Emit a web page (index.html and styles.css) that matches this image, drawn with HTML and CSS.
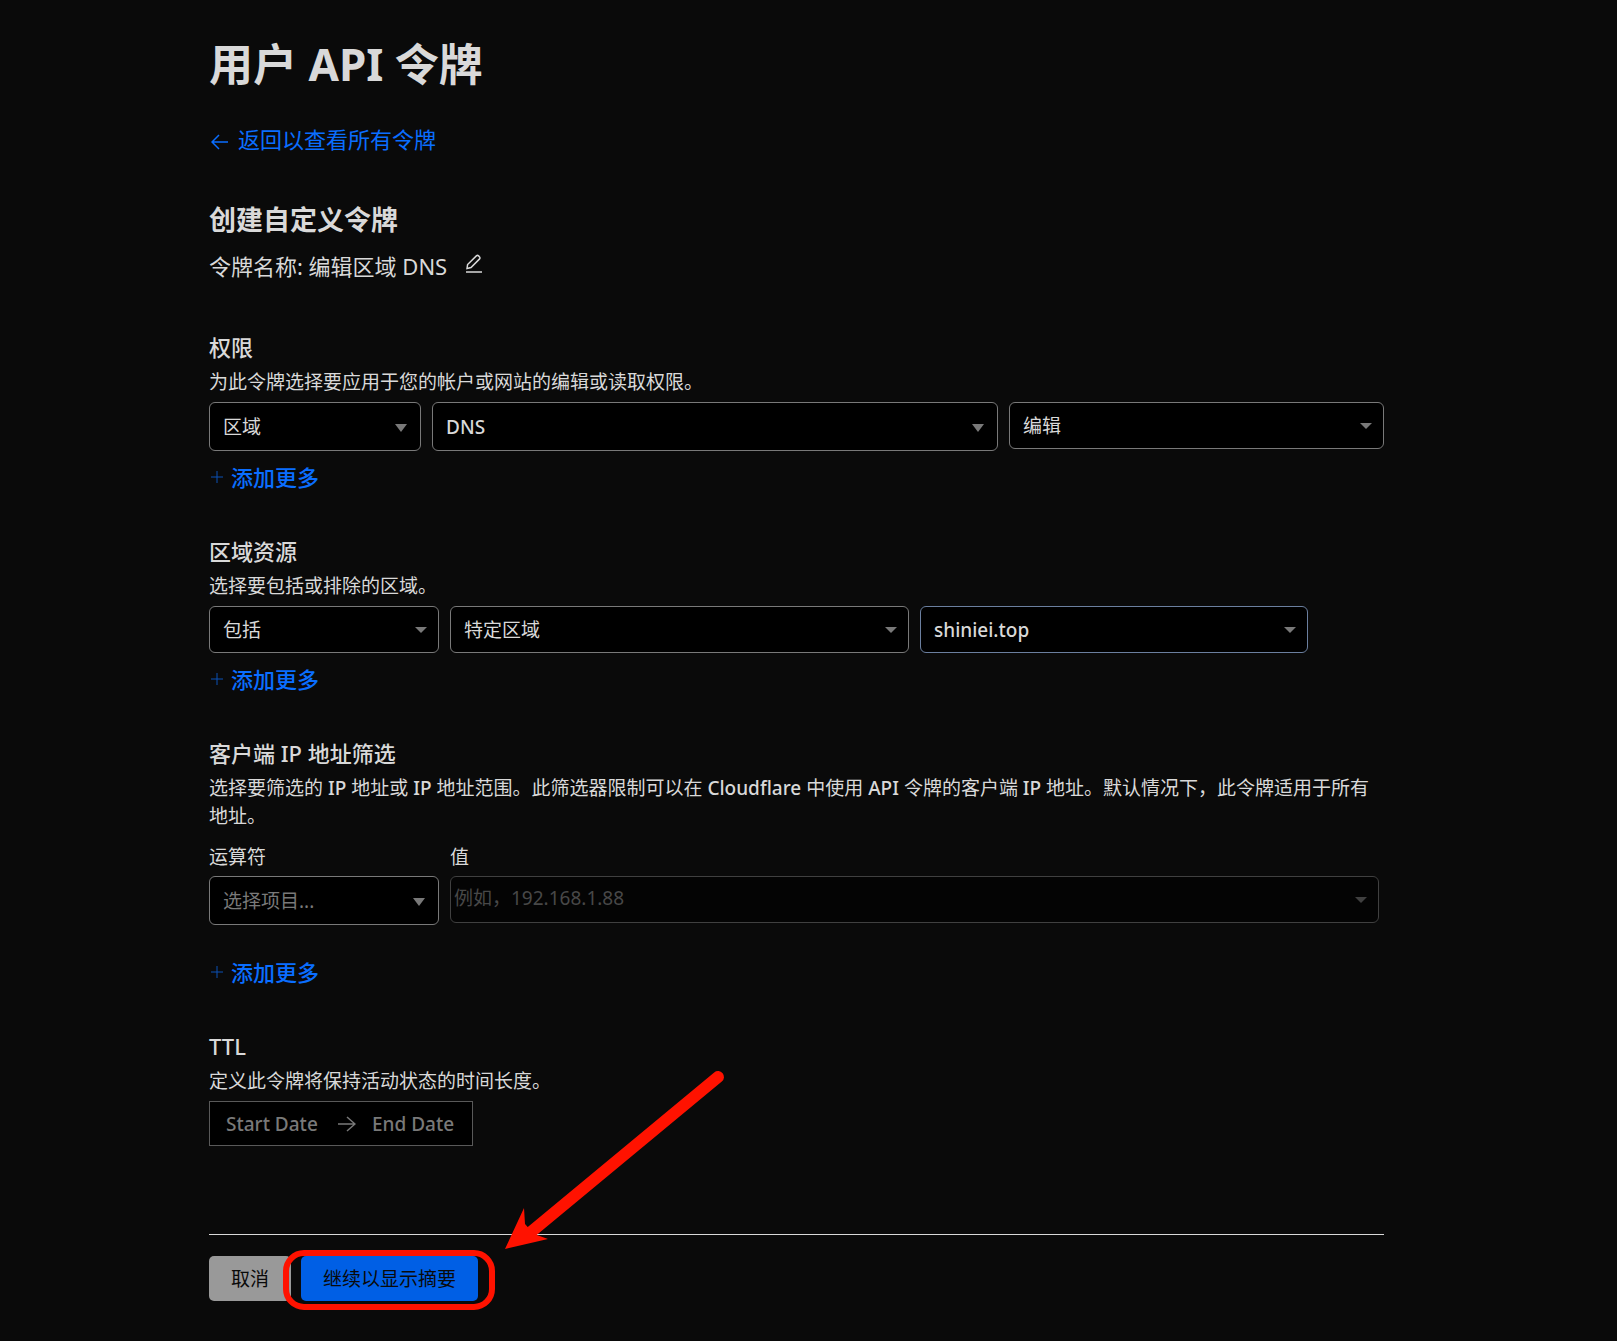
FILE: index.html
```html
<!DOCTYPE html>
<html lang="zh-CN">
<head>
<meta charset="utf-8">
<meta name="viewport" content="width=device-width, initial-scale=1">
<title>用户 API 令牌</title>
<link rel="stylesheet" href="styles.css">
</head>
<body>
<main class="page">
  <h1 class="page-title">用户 API 令牌</h1>
  <a class="back-link" href="#">
    <svg class="icon-back" width="18" height="16" viewBox="0 0 18 16" aria-hidden="true"><path d="M17 8H1M8 1 1 8l7 7"/></svg>
    <span>返回以查看所有令牌</span>
  </a>
  <h2 class="form-title">创建自定义令牌</h2>
  <div class="token-name">
    <span>令牌名称: 编辑区域 DNS</span>
    <button class="edit-button" type="button" aria-label="编辑令牌名称">
      <svg width="18" height="20" viewBox="0 0 18 20" aria-hidden="true"><path d="M2 14.5 2.6 10.5 11.6 1.7Q12.6 1 13.6 1.9L14.6 2.9Q15.5 3.9 14.6 4.9L6 13.6 2 14.5ZM1 18H17"/></svg>
    </button>
  </div>

  <form class="token-form">
    <section class="section">
      <h3 class="section-title">权限</h3>
      <p class="section-text">为此令牌选择要应用于您的帐户或网站的编辑或读取权限。</p>
      <div class="row row-permissions">
        <div class="select tall"><select aria-label="权限类别"><option>区域</option></select></div>
        <div class="select tall latin"><select aria-label="权限项目"><option>DNS</option></select></div>
        <div class="select"><select aria-label="访问级别"><option>编辑</option></select></div>
      </div>
      <button class="add-button" type="button"><svg width="14" height="14" viewBox="0 0 14 14" aria-hidden="true"><path d="M7 1v12M1 7h12"/></svg><span>添加更多</span></button>
    </section>

    <section class="section">
      <h3 class="section-title">区域资源</h3>
      <p class="section-text">选择要包括或排除的区域。</p>
      <div class="row row-resources">
        <div class="select"><select aria-label="包括或排除"><option>包括</option></select></div>
        <div class="select"><select aria-label="区域范围"><option>特定区域</option></select></div>
        <div class="select active latin"><select aria-label="区域"><option>shiniei.top</option></select></div>
      </div>
      <button class="add-button" type="button"><svg width="14" height="14" viewBox="0 0 14 14" aria-hidden="true"><path d="M7 1v12M1 7h12"/></svg><span>添加更多</span></button>
    </section>

    <section class="section">
      <h3 class="section-title">客户端 IP 地址筛选</h3>
      <p class="section-text">选择要筛选的 <span class="latin">IP</span> 地址或 <span class="latin">IP</span> 地址范围。此筛选器限制可以在 <span class="latin">Cloudflare</span> 中使用 <span class="latin">API</span> 令牌的客户端 <span class="latin">IP</span> 地址。默认情况下，此令牌适用于所有地址。</p>
      <div class="row row-filter">
        <div class="field">
          <label class="field-label" for="operator">运算符</label>
          <div class="select tall empty"><select id="operator"><option>选择项目...</option></select></div>
        </div>
        <div class="field">
          <label class="field-label" for="value">值</label>
          <div class="select disabled"><input id="value" type="text" placeholder="例如，192.168.1.88" disabled></div>
        </div>
      </div>
      <button class="add-button spaced" type="button"><svg width="14" height="14" viewBox="0 0 14 14" aria-hidden="true"><path d="M7 1v12M1 7h12"/></svg><span>添加更多</span></button>
    </section>

    <section class="section">
      <h3 class="section-title">TTL</h3>
      <p class="section-text">定义此令牌将保持活动状态的时间长度。</p>
      <div class="date-range latin">
        <input type="text" placeholder="Start Date" aria-label="Start Date">
        <svg width="18" height="16" viewBox="0 0 18 16" aria-hidden="true"><path d="M0 8h17M9 1l8 7-8 7"/></svg>
        <input type="text" placeholder="End Date" aria-label="End Date">
      </div>
    </section>

    <footer class="actions">
      <button class="button button-secondary" type="button">取消</button>
      <div class="callout">
        <button class="button button-primary" type="submit">继续以显示摘要</button>
        <span class="callout-ring"></span>
        <svg class="callout-arrow" width="222" height="182" viewBox="0 0 222 182" aria-hidden="true"><path class="shaft" d="M213 9 26 164"/><path class="head" d="M0 181 19 140 20 156 29 166 43 171Z"/></svg>
      </div>
    </footer>
  </form>
</main>
</body>
</html>
```
FILE: styles.css
```css
* {
  box-sizing: border-box;
}

body {
  margin: 0;
  padding: 36px 24px 40px 0;
  background: #0a0a0a;
  color: #d9d9d9;
  font: 400 19px/28px "Noto Sans", "Noto Sans CJK SC", sans-serif;
}

button,
input,
select {
  font: inherit;
  color: inherit;
}

h1,
h2,
h3,
p {
  margin: 0;
}

svg {
  flex: none;
  fill: none;
  stroke: currentColor;
}

.latin {
  font-weight: 500;
}

.page {
  width: 100%;
  max-width: 1175px;
  margin: 0 auto;
}

.page-title {
  font-size: 44px;
  line-height: 56px;
  font-weight: 700;
}

.back-link {
  display: flex;
  width: fit-content;
  align-items: center;
  gap: 9px;
  margin-top: 33px;
  padding-left: 2px;
  color: #0a6eff;
  font-size: 22px;
  text-decoration: none;
}

.icon-back {
  margin-top: 6px;
  stroke-width: 1.5;
}

.form-title {
  margin-top: 49px;
  font-size: 27px;
  line-height: 36px;
  font-weight: 700;
}

.token-name {
  display: flex;
  align-items: center;
  gap: 18px;
  margin-top: 12px;
  font-size: 22px;
  line-height: 32px;
}

.edit-button {
  display: flex;
  padding: 0 0 4px;
  border: 0;
  background: none;
  stroke-width: 1.5;
}

.token-form {
  display: flex;
  flex-direction: column;
  gap: 46px;
  margin-top: 51px;
}

.section-title {
  font-size: 22px;
  line-height: 28px;
  font-weight: 500;
}

.section-text {
  margin: 7px 0 6px;
}

.row {
  display: grid;
  gap: 11px;
  align-items: start;
}

.row-permissions {
  grid-template-columns: 212fr 566fr 375fr;
}

.row-resources {
  grid-template-columns: 230fr 459fr 388fr;
  margin-right: 76px;
}

.row-filter {
  grid-template-columns: 230fr 929fr;
  margin: 13px 5px 0 0;
}

.field-label {
  display: block;
  margin-bottom: 5px;
}

.select {
  position: relative;
  color: #797979;
}

.select::after {
  content: "";
  position: absolute;
  top: 21px;
  right: 12px;
  width: 12px;
  height: 6px;
  background: currentColor;
  clip-path: polygon(0 0, 100% 0, 50% 100%);
  pointer-events: none;
}

.select select,
.select input {
  display: block;
  width: 100%;
  height: 47px;
  padding: 0 32px 0 13px;
  border: 1px solid #797979;
  border-radius: 6px;
  background: #000;
  color: #d9d9d9;
  appearance: none;
}

.select.tall::after {
  top: 22px;
  right: 14px;
  height: 8px;
}

.select.tall select {
  height: 49px;
}

.select.active select {
  border-color: #6b7f9f;
}

.select.empty select {
  color: #797979;
}

.select.disabled {
  color: #404040;
}

.select.disabled input {
  padding: 0 32px 4px 3px;
  border-color: #404040;
  background: #040404;
}

input::placeholder {
  color: inherit;
  opacity: 1;
}

.select.disabled input::placeholder {
  color: #484848;
}

.add-button {
  display: flex;
  align-items: center;
  gap: 7px;
  margin-top: 12px;
  padding: 0 0 0 1px;
  border: 0;
  background: none;
  color: #0a6eff;
  font-size: 22px;
  line-height: 28px;
  font-weight: 500;
}

.add-button svg {
  opacity: 0.7;
}

.add-button.spaced {
  margin-top: 33px;
}

.date-range {
  display: flex;
  align-items: center;
  justify-content: space-between;
  width: 264px;
  height: 45px;
  padding: 0 16px;
  border: 1px solid #595959;
  background: #000;
  color: #797979;
}

.date-range input {
  width: 96px;
  padding: 0;
  border: 0;
  background: none;
}

.date-range input:last-child {
  width: 84px;
}

.date-range svg {
  stroke-width: 1.5;
}

.actions {
  display: flex;
  gap: 10px;
  margin-top: 42px;
  padding-top: 21px;
  border-top: 1px solid #d9d9d9;
}

.button {
  display: block;
  height: 45px;
  padding: 0 22px;
  border: 0;
  border-radius: 5px;
  color: #0a0a0a;
}

.button-secondary {
  background: #999;
}

.button-primary {
  background: #005fe5;
}

.callout {
  position: relative;
}

.callout-ring {
  position: absolute;
  inset: -6px -17px -9px -18px;
  border: 6px solid #ff1200;
  border-radius: 21px;
  pointer-events: none;
}

.callout-arrow {
  position: absolute;
  left: 204px;
  bottom: 51px;
  pointer-events: none;
}

.callout-arrow .shaft {
  stroke: #ff1200;
  stroke-width: 12;
  stroke-linecap: round;
}

.callout-arrow .head {
  fill: #ff1200;
  stroke: none;
}
```
